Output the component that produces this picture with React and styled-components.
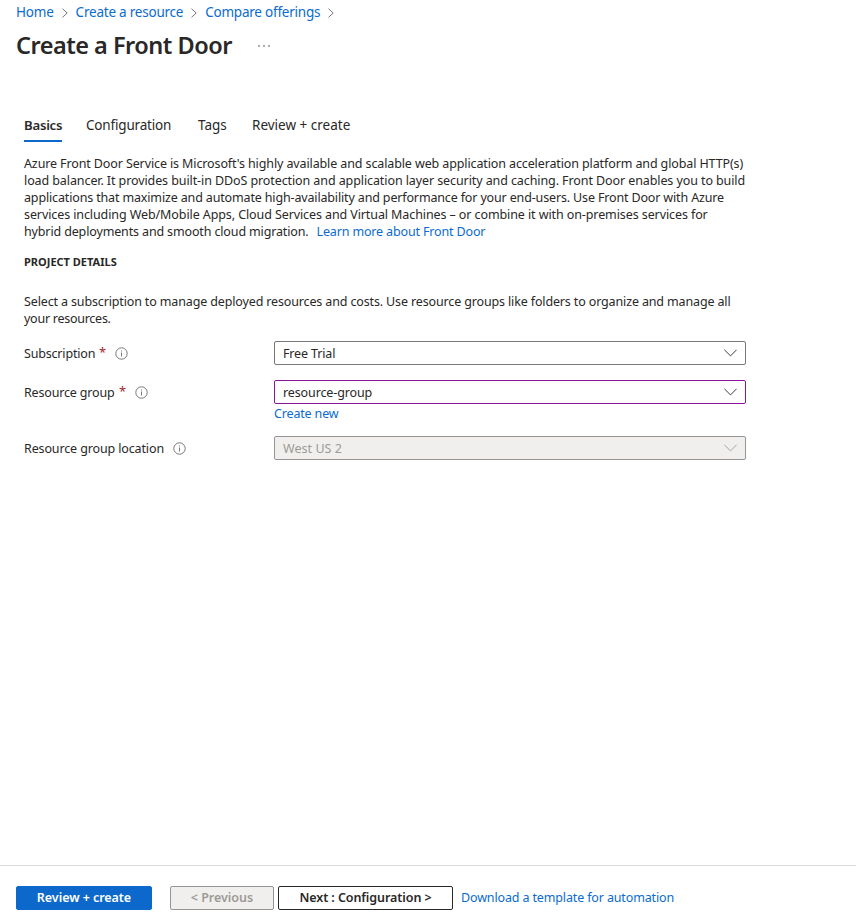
import React from "react";
import styled, { createGlobalStyle, css } from "styled-components";

const GlobalStyle = createGlobalStyle`
  *, *::before, *::after { box-sizing: border-box; }
  body { margin: 0; background: #fff; }
`;

const colors = {
  text: "#292827",
  link: "#0b6bcf",
  primary: "#0c69cb",
  border: "#7a7876",
  edited: "#881798",
  disabledBg: "#f0efed",
  disabledText: "#9c9a98",
  required: "#a4262c",
};

const tracking = css`
  letter-spacing: ${(p) => p.$track ?? -0.12}px;
`;

const Page = styled.div`
  display: flex;
  flex-direction: column;
  height: 923px;
  overflow: hidden;
  background: #fff;
  color: ${colors.text};
  font-family: "Noto Sans", "Open Sans", sans-serif;
  font-size: 12.5px;
  line-height: 17px;
`;

const Breadcrumbs = styled.nav`
  display: flex;
  align-items: center;
  height: 25px;
  padding-left: 16px;
`;

const Crumb = styled.a`
  width: ${(p) => p.$width}px;
  color: ${colors.link};
  font-size: 13.5px;
  white-space: nowrap;
  ${tracking}
`;

const CrumbArrow = styled.svg`
  width: 6px;
  height: 10px;
  margin: 1px 8px 0 7.6px;
  fill: none;
  stroke: #797775;
  stroke-width: 1;
`;

const TitleBar = styled.header`
  display: flex;
  align-items: center;
  height: 42px;
  padding-left: 16px;
`;

const Title = styled.h1`
  width: 242px;
  margin: -2px 0 0;
  font-size: 23.5px;
  font-weight: 600;
  line-height: 32px;
  white-space: nowrap;
  ${tracking}
`;

const MoreIcon = styled.svg`
  width: 12px;
  height: 2px;
  fill: #484644;
`;

const Content = styled.main`
  flex: 1;
  padding: 43px 0 0 24px;
`;

const Tabs = styled.div`
  display: flex;
  gap: 24px;
  height: 32px;
`;

const Tab = styled.div`
  width: ${(p) => p.$width}px;
  padding-top: 7px;
  border-bottom: 2px solid ${(p) => (p.$active ? colors.primary : "transparent")};
  font-size: ${(p) => (p.$active ? 13.2 : 13.5)}px;
  font-weight: ${(p) => (p.$active ? 600 : 400)};
  white-space: nowrap;
  ${tracking}
`;

const Paragraph = styled.p`
  margin: ${(p) => p.$top}px 0 0;
`;

const Line = styled.span`
  display: block;
  white-space: nowrap;
  ${tracking}
`;

const Link = styled.a`
  color: ${colors.link};
  white-space: nowrap;
  ${tracking}
`;

const InlineLink = styled(Link)`
  margin-left: 8px;
`;

const SectionTitle = styled.h2`
  margin: 13px 0 0;
  font-size: 11px;
  font-weight: 700;
  line-height: 17px;
  letter-spacing: 0;
`;

const Form = styled.div`
  display: flex;
  flex-direction: column;
  margin-top: 14px;
`;

const Field = styled.div`
  display: grid;
  grid-template-columns: 250px 472px;
  height: ${(p) => p.$height}px;
  align-items: start;
`;

const Label = styled.div`
  display: flex;
  align-items: center;
  height: 24px;
  white-space: nowrap;
`;

const LabelText = styled.span`
  width: ${(p) => p.$width}px;
  ${tracking}
`;

const Required = styled.span`
  width: 7px;
  margin: -1px 0 0 4px;
  color: ${colors.required};
  font-size: 13px;
`;

const InfoSvg = styled.svg`
  width: 13px;
  height: 13px;
  margin: 1px 0 0 8.5px;
  fill: none;
  stroke: #6b6967;
`;

const Select = styled.div`
  display: flex;
  align-items: center;
  justify-content: space-between;
  height: 24px;
  padding: 0 8px;
  border: 1px solid ${(p) => (p.$edited ? colors.edited : p.$disabled ? "#979593" : colors.border)};
  border-radius: 2px;
  background: ${(p) => (p.$disabled ? colors.disabledBg : "#fff")};
  color: ${(p) => (p.$disabled ? colors.disabledText : colors.text)};
  ${tracking}
`;

const Chevron = styled.svg`
  width: 13px;
  height: 8px;
  fill: none;
  stroke: ${(p) => (p.$disabled ? "#a5a3a1" : "#3b3a39")};
  stroke-width: 1;
`;

const Control = styled.div`
  display: flex;
  flex-direction: column;
`;

const FieldAction = styled(Link)`
  margin-top: 1px;
`;

const Footer = styled.footer`
  display: flex;
  align-items: flex-start;
  height: 58px;
  padding: 20px 0 0 16px;
  border-top: 1px solid #dcdbda;
`;

const buttonKinds = {
  primary: css`
    border-color: ${colors.primary};
    background: ${colors.primary};
    color: #fff;
  `,
  disabled: css`
    border-color: #979593;
    background: ${colors.disabledBg};
    color: ${colors.disabledText};
  `,
  standard: css`
    border-color: #292827;
    background: #fff;
    color: ${colors.text};
  `,
};

const Button = styled.button`
  width: ${(p) => p.$width}px;
  height: 24px;
  margin: 0 ${(p) => p.$gap}px 0 0;
  padding: 0;
  border: 1px solid;
  border-radius: 2px;
  font: 600 12.5px/20px "Noto Sans", "Open Sans", sans-serif;
  white-space: nowrap;
  ${(p) => buttonKinds[p.$kind]}
  ${tracking}
`;

const FooterLink = styled(Link)`
  line-height: 23px;
`;

const Separator = () => (
  <CrumbArrow viewBox="0 0 6 10">
    <path d="M0.5 0.7 L5.2 5 L0.5 9.3" />
  </CrumbArrow>
);

const Info = () => (
  <InfoSvg viewBox="0 0 13 13">
    <circle cx="6.5" cy="6.5" r="5.7" strokeWidth="0.9" />
    <path d="M6.5 5.5V9.5M6.5 3.5V4.5" strokeWidth="0.9" />
  </InfoSvg>
);

function Dropdown({ value, track, edited, disabled }) {
  return (
    <Select $edited={edited} $disabled={disabled} $track={track}>
      {value}
      <Chevron $disabled={disabled} viewBox="0 0 13 8">
        <path d="M0.4 0.8 L6.5 6.9 L12.6 0.8" />
      </Chevron>
    </Select>
  );
}

export default function App() {
  return (
    <Page>
      <GlobalStyle />
      <Breadcrumbs>
        <Crumb $width={38} $track={-0.15}>Home</Crumb>
        <Separator />
        <Crumb $width={108} $track={-0.22}>Create a resource</Crumb>
        <Separator />
        <Crumb $width={115} $track={-0.22}>Compare offerings</Crumb>
        <Separator />
      </Breadcrumbs>
      <TitleBar>
        <Title $track={-0.5}>Create a Front Door</Title>
        <MoreIcon viewBox="0 0 12 2">
          <circle cx="1" cy="1" r="0.8" />
          <circle cx="6" cy="1" r="0.8" />
          <circle cx="11" cy="1" r="0.8" />
        </MoreIcon>
      </TitleBar>
      <Content>
        <Tabs>
          <Tab $active $width={38} $track={-0.26}>Basics</Tab>
          <Tab $width={88} $track={-0.18}>Configuration</Tab>
          <Tab $width={30} $track={0}>Tags</Tab>
          <Tab $width={100} $track={0}>Review + create</Tab>
        </Tabs>
        <Paragraph $top={13}>
          <Line $track={-0.116}>Azure Front Door Service is Microsoft's highly available and scalable web application acceleration platform and global HTTP(s)</Line>
          <Line $track={-0.093}>load balancer. It provides built-in DDoS protection and application layer security and caching. Front Door enables you to build</Line>
          <Line $track={-0.15}>applications that maximize and automate high-availability and performance for your end-users. Use Front Door with Azure</Line>
          <Line $track={-0.096}>services including Web/Mobile Apps, Cloud Services and Virtual Machines – or combine it with on-premises services for</Line>
          <Line $track={-0.14}>
            hybrid deployments and smooth cloud migration.
            <InlineLink $track={-0.15}>Learn more about Front Door</InlineLink>
          </Line>
        </Paragraph>
        <SectionTitle>PROJECT DETAILS</SectionTitle>
        <Paragraph $top={23}>
          <Line $track={-0.14}>Select a subscription to manage deployed resources and costs. Use resource groups like folders to organize and manage all</Line>
          <Line $track={-0.26}>your resources.</Line>
        </Paragraph>
        <Form>
          <Field $height={39}>
            <Label>
              <LabelText $width={71} $track={-0.18}>Subscription</LabelText>
              <Required>*</Required>
              <Info />
            </Label>
            <Dropdown value="Free Trial" track={-0.15} />
          </Field>
          <Field $height={56}>
            <Label>
              <LabelText $width={91} $track={-0.17}>Resource group</LabelText>
              <Required>*</Required>
              <Info />
            </Label>
            <Control>
              <Dropdown value="resource-group" track={-0.12} edited />
              <FieldAction $track={-0.16}>Create new</FieldAction>
            </Control>
          </Field>
          <Field $height={24}>
            <Label>
              <LabelText $width={140} $track={-0.13}>Resource group location</LabelText>
              <Info />
            </Label>
            <Dropdown value="West US 2" track={0.05} disabled />
          </Field>
        </Form>
      </Content>
      <Footer>
        <Button $kind="primary" $width={136} $gap={18} $track={-0.05}>Review + create</Button>
        <Button $kind="disabled" $width={104} $gap={4} $track={-0.03} disabled>&lt; Previous</Button>
        <Button $kind="standard" $width={175} $gap={8} $track={-0.08}>Next : Configuration &gt;</Button>
        <FooterLink $track={-0.14}>Download a template for automation</FooterLink>
      </Footer>
    </Page>
  );
}
